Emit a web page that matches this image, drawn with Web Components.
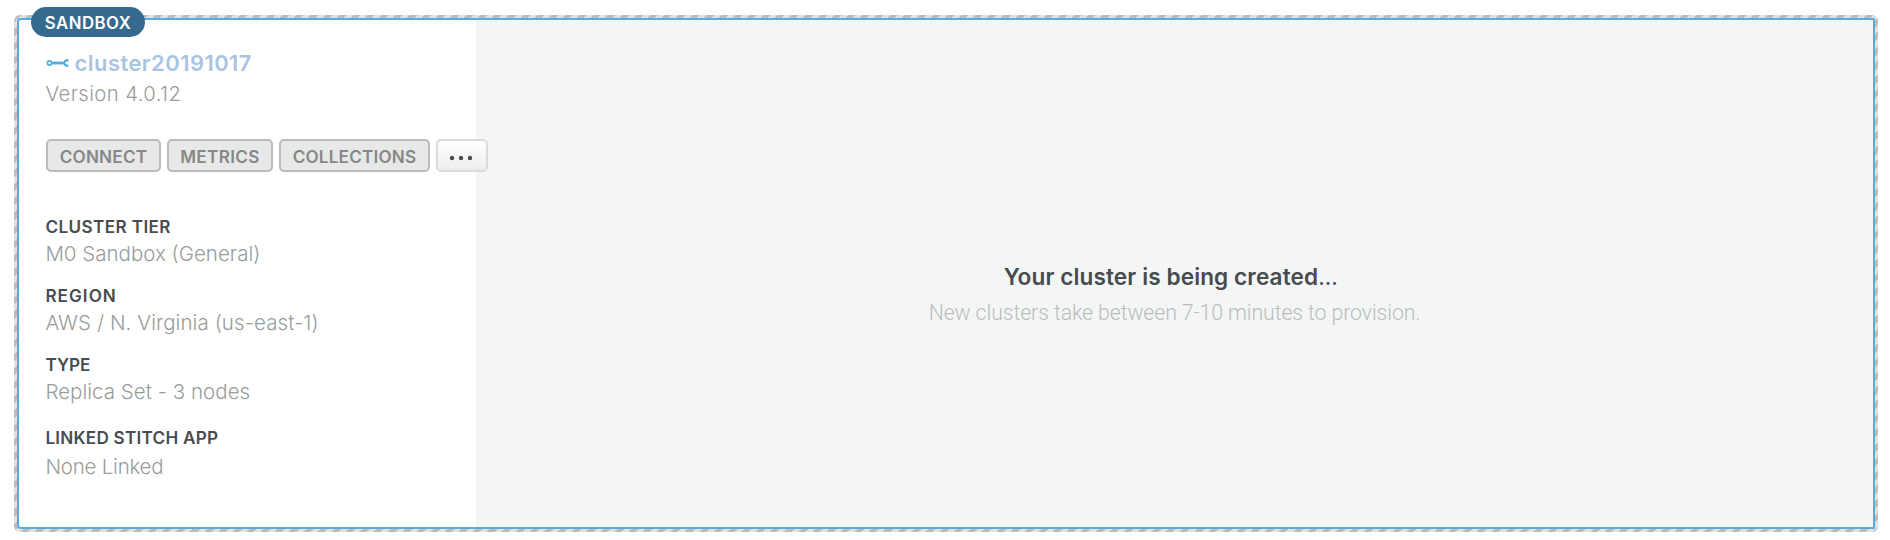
<!DOCTYPE html>
<html lang="en">
<head>
<meta charset="utf-8">
<title>Clusters</title>
<style>
html,body{margin:0;height:100%}
body{background:#fff;font-family:Inter,"Liberation Sans",sans-serif;color:#464c4f;overflow:hidden}
.dots{font-weight:400;letter-spacing:.6px}
</style>
</head>
<body>
<cluster-card>
  <plan-badge slot="badge">SANDBOX</plan-badge>
  <cluster-title slot="side">cluster20191017<span slot="version">Version 4.0.12</span></cluster-title>
  <action-bar slot="side">
    <action-button style="--w:115px;--ls:.25px">CONNECT</action-button>
    <action-button style="--w:106px;--ls:.38px">METRICS</action-button>
    <action-button style="--w:151px;--ls:.21px">COLLECTIONS</action-button>
    <more-button></more-button>
  </action-bar>
  <info-list slot="side">
    <info-item style="--ls:.41px;--vls:0px"><span slot="label">CLUSTER TIER</span>M0 Sandbox (General)</info-item>
    <info-item style="--ls:1.05px;--vls:.08px"><span slot="label">REGION</span>AWS / N. Virginia (us-east-1)</info-item>
    <info-item style="--vls:.03px"><span slot="label">TYPE</span>Replica Set - 3 nodes</info-item>
    <info-item style="--ls:.26px;--vls:-.22px;--before:4px;--gap:4px"><span slot="label">LINKED STITCH APP</span>None Linked</info-item>
  </info-list>
  <status-message slot="main"><span slot="heading">Your cluster is being created<span class="dots">…</span></span>New clusters take between 7-10 minutes to provision.</status-message>
</cluster-card>
<script>
const define = (name, html) => {
  const template = document.createElement('template');
  template.innerHTML = html;
  customElements.define(name, class extends HTMLElement {
    constructor() {
      super();
      this.attachShadow({mode: 'open'}).append(template.content.cloneNode(true));
    }
  });
};

define('cluster-card', `<style>
:host{display:block;box-sizing:border-box;position:relative;height:540px;padding:15px 12px 8px 14px}
.frame{box-sizing:border-box;height:100%;padding:3px;border-radius:6px;
  background:repeating-linear-gradient(135deg,#bdbcba 0 5px,#e0e1e0 5px 10px)}
.card{box-sizing:border-box;height:100%;display:flex;border:2px solid #58ade0;border-radius:4px 1px 1px 4px;background:#fff}
.side{width:457px;flex:none;box-sizing:border-box;padding:31px 0 0 26px;position:relative;z-index:1}
.main{flex:1;background:#f4f6f5;display:flex;justify-content:center}
.badge{position:absolute;left:31px;top:7px;z-index:2}
</style>
<div class="frame"><div class="card"><div class="side"><slot name="side"></slot></div><div class="main"><slot name="main"></slot></div></div></div>
<div class="badge"><slot name="badge"></slot></div>`);

define('plan-badge', `<style>
:host{display:flex;box-sizing:border-box;width:114px;height:30px;border-radius:15px;background:#336a8e;color:#fff;
 justify-content:center;font-size:16.8px;font-weight:600;line-height:32px;letter-spacing:.5px;white-space:nowrap}
</style><slot></slot>`);

define('cluster-title', `<style>
:host{display:block;white-space:nowrap}
.name{display:flex;align-items:center;height:24px;line-height:24px;font-size:21.9px;font-weight:600;letter-spacing:.5px;color:#a9c4e3}
svg{display:block;width:24px;height:10px;margin:0 5px 0 .5px}
.version{margin-top:7px;height:24px;line-height:24px;font-size:20.3px;font-weight:350;letter-spacing:.4px;color:#999c9c;padding-left:.5px}
</style>
<div class="name"><svg viewBox="0 0 24 10" fill="none" stroke="#55abe0"><circle cx="3.500" cy="5" r="2.100" stroke-width="1.700"/><path d="M5.500 5H18" stroke-width="2.800"/><path d="M22.500 2.400H19.800L17.800 5L19.800 7.600H22.500" stroke-width="2.200" stroke-linejoin="round"/></svg><slot></slot></div>
<div class="version"><slot name="version"></slot></div>`);

define('action-bar', `<style>
:host{display:flex;gap:6px;margin:33px 0 0 1px}
</style><slot></slot>`);

define('action-button', `<style>
:host{display:flex;flex:none;box-sizing:border-box;width:var(--w);height:33px;justify-content:center;border:2px solid #b9bcbb;border-radius:5px;
 background:#e7e9e8;color:#858789;font-size:17.1px;font-weight:600;line-height:32px;letter-spacing:var(--ls);white-space:nowrap}
</style><slot></slot>`);

define('more-button', `<style>
:host{display:flex;flex:none;box-sizing:border-box;width:52px;height:33px;align-items:center;justify-content:center;border:2px solid #d8dddc;border-radius:5px;
 background:linear-gradient(#fff,#ededed)}
svg{display:block;margin:5px 2px 0 0}
</style><svg width="24" height="6" fill="#464c4f"><circle cx="3" cy="3" r="2.2"/><circle cx="12" cy="3" r="2.2"/><circle cx="21" cy="3" r="2.2"/></svg>`);

define('info-list', `<style>
:host{display:flex;flex-direction:column;gap:18px;margin-top:43px}
</style><slot></slot>`);

define('info-item', `<style>
:host{display:block;white-space:nowrap;margin-top:var(--before,0);padding-left:.4px}
.label{height:24px;line-height:24px;font-size:17.1px;font-weight:600;letter-spacing:var(--ls,0)}
.value{height:25px;line-height:25px;margin-top:var(--gap,2px);font-size:20.5px;font-weight:350;letter-spacing:var(--vls,0);color:#999c9c}
</style>
<div class="label"><slot name="label"></slot></div><div class="value"><slot></slot></div>`);

define('status-message', `<style>
:host{display:flex;flex-direction:column;align-items:center;padding-top:245px;white-space:nowrap}
.heading{height:24px;line-height:24px;font-size:22.6px;font-weight:600;letter-spacing:.1px;margin-right:7px}
.text{margin-top:11px;height:25px;line-height:25px;font-family:Roboto,sans-serif;font-size:21.3px;font-weight:300;letter-spacing:-.11px;color:#b9bdbd}
</style>
<div class="heading"><slot name="heading"></slot></div><div class="text"><slot></slot></div>`);
</script>
</body>
</html>
